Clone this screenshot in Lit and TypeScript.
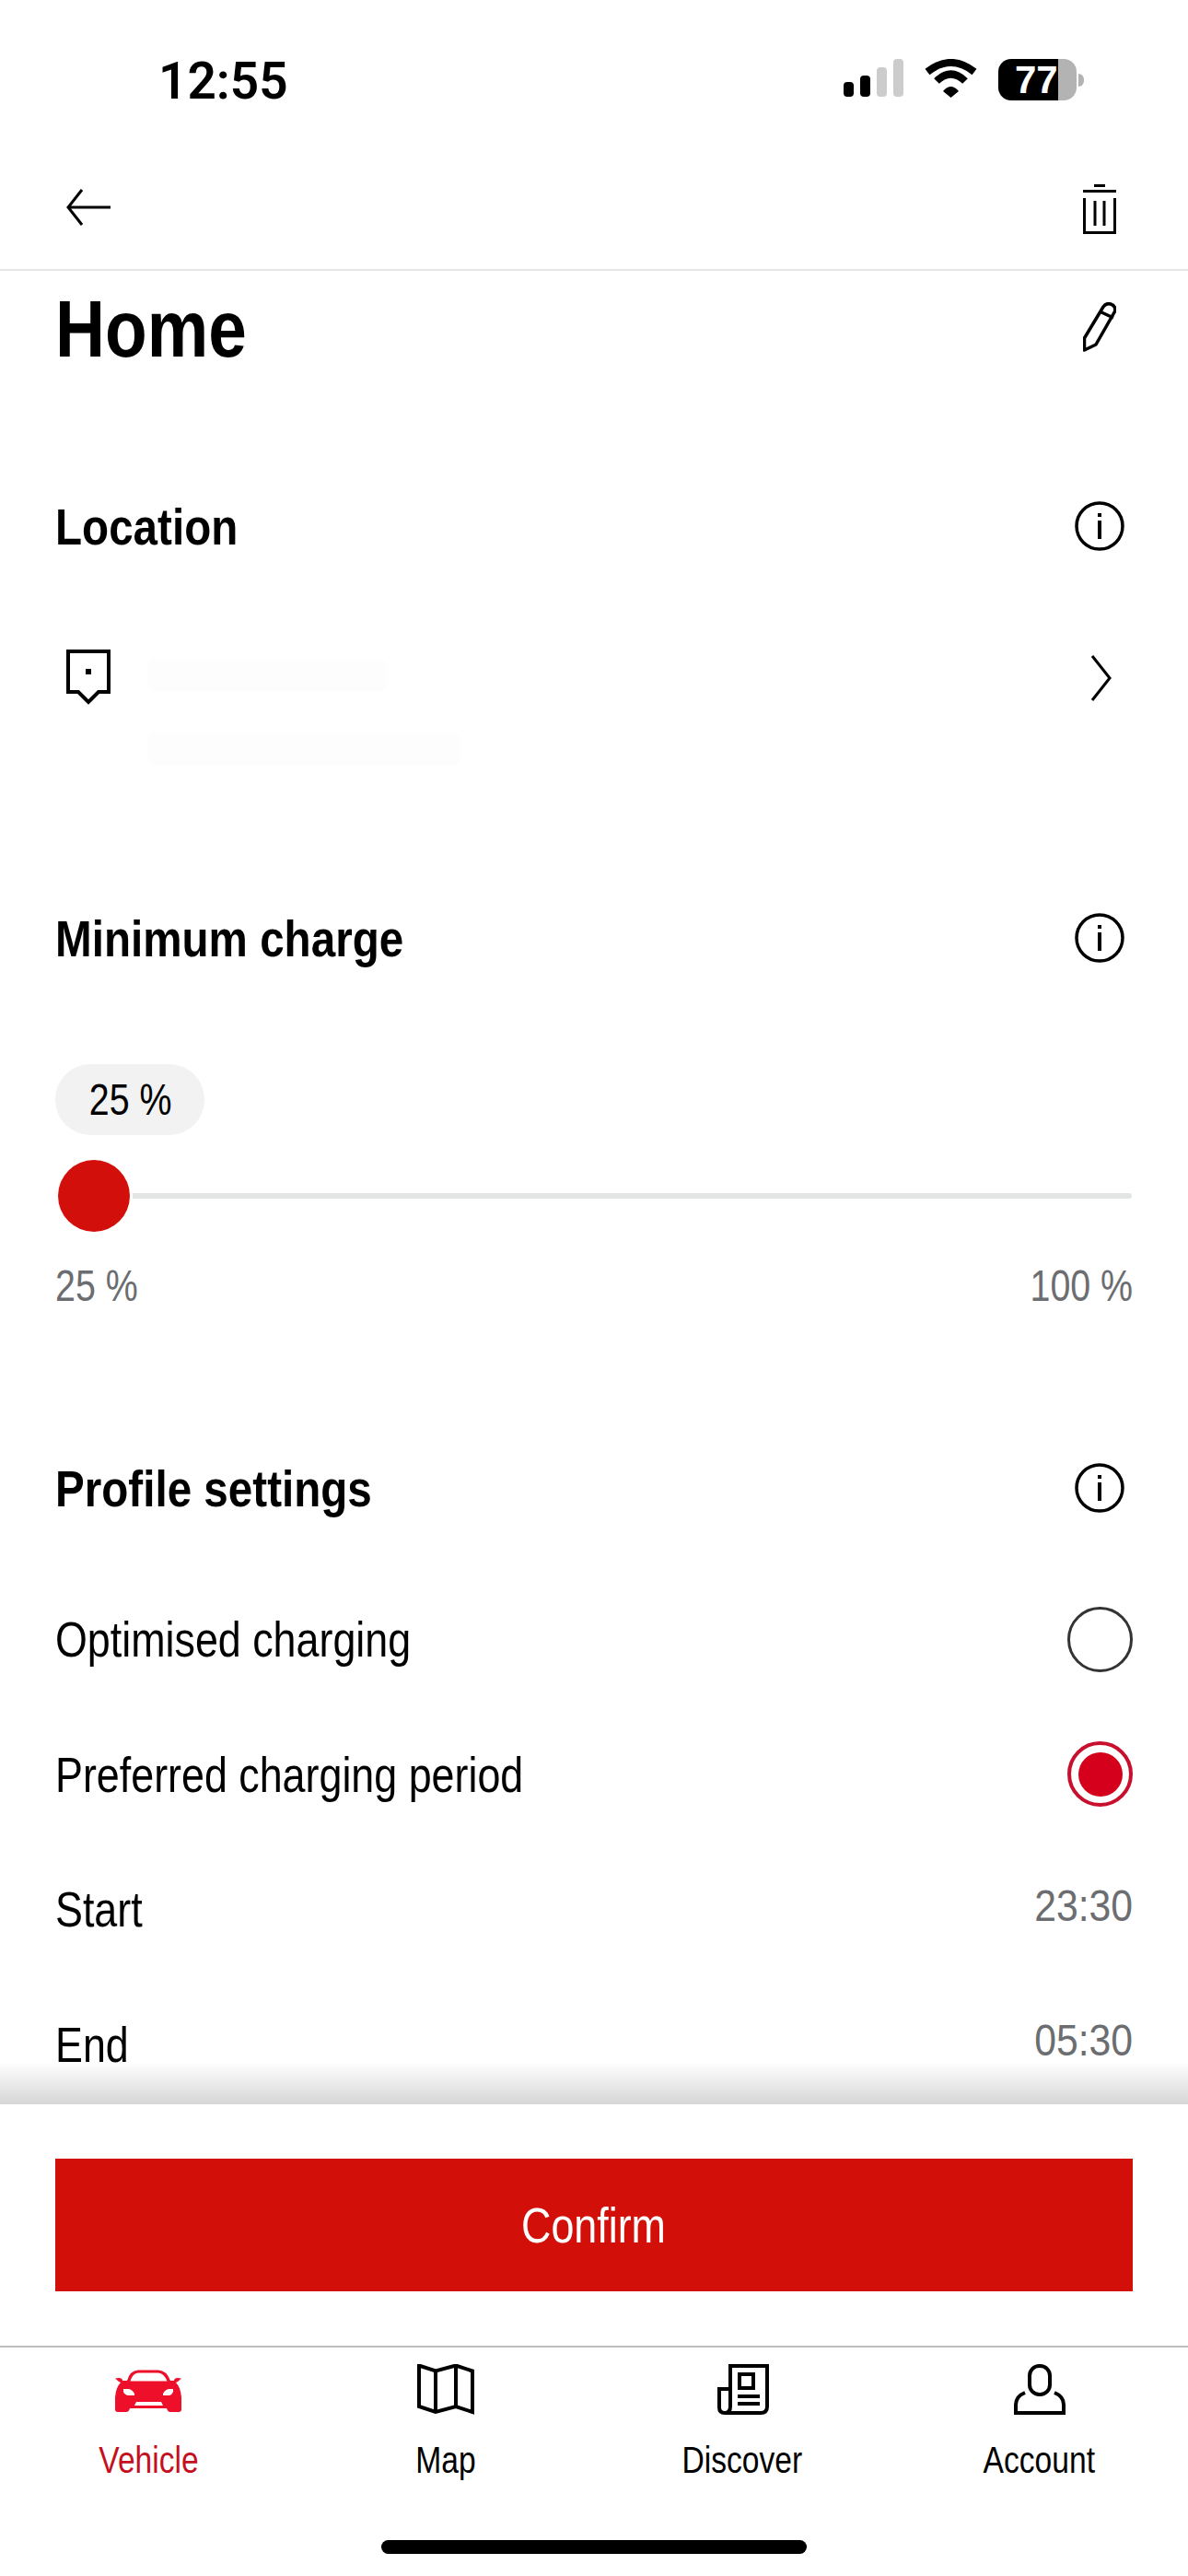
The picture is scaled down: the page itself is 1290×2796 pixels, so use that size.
import { LitElement, html, css, svg } from 'lit';
import { customElement, property } from 'lit/decorators.js';

const infoIcon = html`<svg class="info" width="54" height="54" viewBox="0 0 54 54">
  <circle cx="27" cy="27" r="25" fill="none" stroke="#000" stroke-width="3.5"></circle>
  <rect x="25" y="13" width="4" height="4" fill="#000"></rect>
  <rect x="25" y="21" width="4" height="20" fill="#000"></rect>
</svg>`;

// tab bar icons, all drawn in a 72x54 box
const tabIcons: Record<string, unknown> = {
  car: svg`<g transform="translate(0 6)">
    <path fill="#ee0f2a" fill-rule="evenodd" d="M13 12 Q16 1 25 0.5 L47 0.5 Q56 1 60 12 L64 12 Q64 9 68 9 L72 9.5 L68 13 L66 14 Q71 19 72 30 L72 43 Q72 46 69 46 L60 46 Q57 46 56 42 L16 42 Q15 46 12 46 L3 46 Q0 46 0 43 L0 30 Q1 19 6 14 L4 13 L0 9.5 L4 9 Q8 9 8 12 Z M16.5 12.5 L56.5 12.5 Q53 4 47 3.5 L25 3.5 Q19 4 16.5 12.5 Z M9 21 L9 24 Q10 27 14 28 L21 28 L21 26 Q18 21 14 21 Z M63 21 L59 21 Q55 21 52 26 L52 28 L59 28 Q62 27 63 24 Z M23 35 L21 39 L52 39 L50 35 Z"></path>
  </g>`,
  map: svg`<g fill="none" stroke="#000" stroke-width="4" stroke-linejoin="miter">
    <path d="M7 1.5 L25 7.5 L47 1.5 L65 7.5 L65 52 L47 46 L25 52 L7 46 Z"></path>
    <path d="M25 7.5 L25 52 M47 1.5 L47 46"></path>
  </g>`,
  news: svg`<g fill="none" stroke="#000" stroke-width="4">
    <path d="M23 45 L23 2 L63 2 L63 46 Q63 53 56 53 L17 53 Q11 53 11 47 L11 27 L23 27 L23 46 Q23 53 17 53"></path>
    <rect x="33" y="11" width="15" height="15"></rect>
    <path d="M31 35 L55 35 M31 43 L55 43"></path>
  </g>`,
  user: svg`<g fill="none" stroke="#000" stroke-width="4">
    <rect x="25" y="2" width="22" height="31" rx="10.5"></rect>
    <path d="M20 31 Q10 35 10 44 L10 53 L62 53 L62 44 Q62 35 52 31"></path>
  </g>`,
};

@customElement('tab-item')
export class TabItem extends LitElement {
  @property({ type: String }) label: string = '';
  @property({ type: String }) icon: string = 'car';
  @property({ type: Boolean }) active: boolean = false;

  static styles = css`
    :host {
      display: flex;
      flex-direction: column;
      align-items: center;
      flex: 1 1 0;
    }
    svg {
      display: block;
    }
    .label {
      margin-top: 18px;
      font: 400 40px/60px 'Liberation Sans', sans-serif;
      color: #000;
      transform: scaleX(0.84);
      white-space: nowrap;
    }
    .label.on {
      color: #c4101f;
    }
  `;

  render() {
    return html`
      <svg width="72" height="56" viewBox="0 0 72 56">${tabIcons[this.icon]}</svg>
      <span class="label ${this.active ? 'on' : ''}">${this.label}</span>
    `;
  }
}

@customElement('app-root')
export class AppRoot extends LitElement {
  static styles = css`
    :host {
      display: block;
      width: 1290px;
      height: 2796px;
      background: #fff;
      color: #000;
      font-family: 'Liberation Sans', sans-serif;
      overflow: hidden;
    }
    svg {
      display: block;
      flex: none;
    }
    .page {
      display: flex;
      flex-direction: column;
      height: 2796px;
    }

    /* the reference face is condensed, none is installed so squeeze the text */
    .n {
      display: inline-block;
      white-space: nowrap;
      transform: scaleX(0.83);
      transform-origin: left center;
    }
    .n.bold {
      transform: scaleX(0.85);
    }
    .n.tight {
      transform: scaleX(0.82);
    }
    .n.wide {
      transform: scaleX(0.89);
    }
    .n.r {
      transform-origin: right center;
    }
    .n.c {
      transform-origin: center;
    }

    /* status bar */
    .status {
      height: 150px;
      flex: none;
      display: flex;
      justify-content: space-between;
      padding: 62px 113px 0 172px;
      box-sizing: border-box;
    }
    .time {
      font: 600 55px/52px Roboto, 'Liberation Sans', sans-serif;
    }
    .sys {
      display: flex;
      align-items: flex-start;
      gap: 23px;
      padding-top: 2px;
    }
    .battery {
      width: 85px;
      height: 45px;
      border-radius: 14px;
      overflow: hidden;
      background: linear-gradient(90deg, #000 65px, #b3b3b3 65px);
      color: #fff;
      font: 700 42px/46px 'Liberation Sans', sans-serif;
    }
    .battery span {
      display: block;
      width: 65px;
      padding-left: 18px;
      box-sizing: border-box;
    }
    .battery-wrap {
      display: flex;
      align-items: center;
      gap: 2px;
    }
    .nub {
      width: 6px;
      height: 14px;
      background: #b3b3b3;
      border-radius: 0 7px 7px 0;
    }

    /* nav */
    .nav {
      height: 144px;
      flex: none;
      box-sizing: border-box;
      border-bottom: 2px solid #e6e6e6;
      display: flex;
      justify-content: space-between;
      padding: 50px 78px 0 72px;
    }
    .back {
      margin-top: 5px;
    }

    /* scroll area */
    .content {
      flex: 1 1 0;
      min-height: 0;
      overflow: hidden;
      padding: 0 60px;
      position: relative;
    }
    .title {
      height: 120px;
      box-sizing: border-box;
      padding: 6px 18px 0 0;
      display: flex;
      align-items: center;
      justify-content: space-between;
      font-size: 88px;
      font-weight: 700;
      margin-bottom: 107px;
    }
    .pencil {
      margin-bottom: 4px;
    }
    .head {
      height: 100px;
      display: flex;
      align-items: center;
      justify-content: space-between;
      font-size: 56px;
      font-weight: 700;
      padding-right: 9px;
    }
    .place {
      display: flex;
      align-items: flex-start;
      padding: 84px 22px 0 12px;
      height: 347px;
      box-sizing: border-box;
    }
    .place-lines {
      flex: 1;
      padding-left: 40px;
      display: flex;
      flex-direction: column;
      gap: 45px;
      padding-top: 10px;
    }
    .blur {
      height: 35px;
      background: #fdfdfd;
      border-radius: 8px;
    }
    .blur.a {
      width: 260px;
    }
    .blur.b {
      width: 340px;
    }
    .chev {
      margin-top: 6px;
    }

    /* slider */
    .pill {
      margin-top: 87px;
      width: 162px;
      height: 77px;
      box-sizing: border-box;
      padding-left: 2px;
      border-radius: 38px;
      background: #f2f2f2;
      font-size: 48px;
      display: flex;
      align-items: center;
      justify-content: center;
    }
    .slider {
      margin-top: 27px;
      height: 78px;
      display: flex;
      align-items: center;
      gap: 3px;
      padding: 0 1px 0 3px;
    }
    .thumb {
      width: 78px;
      height: 78px;
      border-radius: 50%;
      background: #d30f0b;
      flex: none;
    }
    .track {
      flex: 1;
      height: 6px;
      border-radius: 0 3px 3px 0;
      background: #e3e4e4;
    }
    .scale {
      margin-top: 35px;
      display: flex;
      justify-content: space-between;
      font-size: 48px;
      line-height: 48px;
      color: #6b6d70;
      margin-bottom: 145px;
    }

    /* rows */
    .rows {
      margin-top: 41px;
    }
    .row {
      height: 146.5px;
      display: flex;
      align-items: center;
      justify-content: space-between;
      font-size: 54px;
    }
    .value {
      font-size: 48px;
      color: #6b6d70;
      margin-bottom: 8px;
    }
    .radio {
      width: 71px;
      height: 71px;
      box-sizing: border-box;
      border-radius: 50%;
      border: 3px solid #333;
    }
    .radio.on {
      border: 4px solid #c8102e;
      display: flex;
      align-items: center;
      justify-content: center;
    }
    .radio.on::after {
      content: '';
      width: 48px;
      height: 48px;
      border-radius: 50%;
      background: #d5001c;
    }

    /* footer */
    .shade {
      position: absolute;
      left: 0;
      right: 0;
      bottom: 0;
      height: 46px;
      background: linear-gradient(180deg, rgba(214, 214, 214, 0), #d6d6d6);
    }
    .footer {
      flex: none;
      height: 262px;
      box-sizing: border-box;
      padding: 59px 60px 0;
      background: #fff;
    }
    .confirm {
      height: 144px;
      background: #d30f0a;
      color: #fff;
      font-size: 54px;
      display: flex;
      align-items: center;
      justify-content: center;
    }
    .tabs {
      flex: none;
      height: 250px;
      box-sizing: border-box;
      border-top: 2px solid #bdbdbd;
      padding-top: 18px;
      display: flex;
      position: relative;
    }
    .home-bar {
      position: absolute;
      left: 414px;
      bottom: 24px;
      width: 462px;
      height: 15px;
      border-radius: 8px;
      background: #000;
    }
  `;

  render() {
    return html`
      <div class="page">
        <div class="status">
          <span class="time">12:55</span>
          <div class="sys">
            <svg width="65" height="41" viewBox="0 0 65 41">
              <rect x="0" y="25" width="11" height="16" rx="4" fill="#000"></rect>
              <rect x="18" y="18" width="11" height="23" rx="4" fill="#000"></rect>
              <rect x="36" y="9" width="11" height="32" rx="4" fill="#ccc"></rect>
              <rect x="54" y="0" width="11" height="41" rx="4" fill="#ccc"></rect>
            </svg>
            <svg width="57" height="42" viewBox="0 0 57 42">
              <path d="M3 14 Q28.5 -6 54 14" fill="none" stroke="#000" stroke-width="8"></path>
              <path d="M13 24 Q28.5 9 44 24" fill="none" stroke="#000" stroke-width="8"></path>
              <path d="M28.5 42 L20 35 Q28.5 25 37 35 Z" fill="#000"></path>
            </svg>
            <div class="battery-wrap">
              <div class="battery"><span>77</span></div>
              <div class="nub"></div>
            </div>
          </div>
        </div>

        <div class="nav">
          <svg class="back" width="48" height="40" viewBox="0 0 48 40">
            <path d="M17 1 L2 20 L17 39 M2 20 L48 20" fill="none" stroke="#000" stroke-width="3"></path>
          </svg>
          <svg width="36" height="54" viewBox="0 0 36 54">
            <path d="M12 1.5 L24 1.5 M0 7.5 L36 7.5 M1.5 15 L1.5 52.5 L34.500 52.5 L34.5 15 M13 18 L13 45 M23 18 L23 45" fill="none" stroke="#000" stroke-width="3"></path>
          </svg>
        </div>

        <div class="content">
          <div class="title">
            <span class="n bold">Home</span>
            <svg class="pencil" width="36" height="54" viewBox="0 0 36 54">
              <path d="M1.500 52 L1.500 39 L22 5 Q25 0.500 30 2 Q36 4 34.500 10 L14 46 Z M18 10 L33 17" fill="none" stroke="#000" stroke-width="3.5" stroke-linejoin="round"></path>
            </svg>
          </div>

          <div class="head"><span class="n bold">Location</span>${infoIcon}</div>
          <div class="place">
            <svg width="48" height="60" viewBox="0 0 48 60">
              <path d="M2 2 L46 2 L46 46 L35 46 L24 57 L13 46 L2 46 Z" fill="none" stroke="#000" stroke-width="4"></path>
              <rect x="21" y="21" width="6" height="6" fill="#000"></rect>
            </svg>
            <div class="place-lines">
              <div class="blur a"></div>
              <div class="blur b"></div>
            </div>
            <svg class="chev" width="24" height="50" viewBox="0 0 24 50">
              <path d="M2 1 L21 25 L2 49" fill="none" stroke="#000" stroke-width="3"></path>
            </svg>
          </div>

          <div class="head"><span class="n bold">Minimum charge</span>${infoIcon}</div>
          <div class="pill"><span class="n tight c">25 %</span></div>
          <div class="slider">
            <div class="thumb"></div>
            <div class="track"></div>
          </div>
          <div class="scale"><span class="n tight">25 %</span><span class="n tight r">100 %</span></div>

          <div class="head"><span class="n bold">Profile settings</span>${infoIcon}</div>
          <div class="rows">
            <div class="row"><span class="n">Optimised charging</span><div class="radio"></div></div>
            <div class="row"><span class="n">Preferred charging period</span><div class="radio on"></div></div>
            <div class="row"><span class="n">Start</span><span class="n wide r value">23:30</span></div>
            <div class="row"><span class="n">End</span><span class="n wide r value">05:30</span></div>
          </div>
          <div class="shade"></div>
        </div>

        <div class="footer">
          <div class="confirm"><span class="n c">Confirm</span></div>
        </div>

        <div class="tabs">
          <tab-item label="Vehicle" icon="car" active></tab-item>
          <tab-item label="Map" icon="map"></tab-item>
          <tab-item label="Discover" icon="news"></tab-item>
          <tab-item label="Account" icon="user"></tab-item>
          <div class="home-bar"></div>
        </div>
      </div>
    `;
  }
}
